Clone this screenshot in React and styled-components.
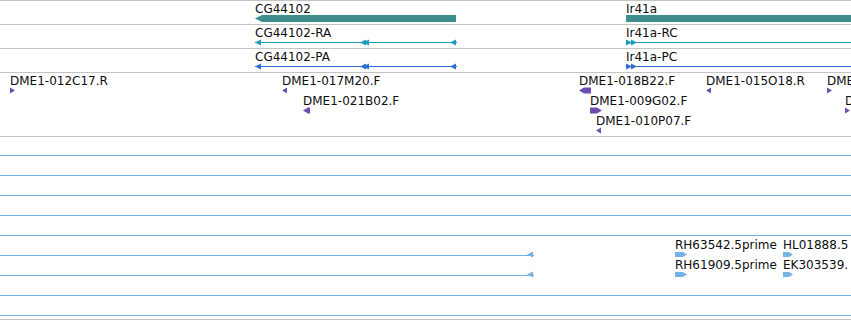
import styled, { createGlobalStyle } from "styled-components";

const GlobalStyle = createGlobalStyle`
  html, body {
    margin: 0;
    padding: 0;
    background: #fff;
  }
  body {
    font-family: "DejaVu Sans", "Liberation Sans", sans-serif;
  }
`;

const GENE = "#3f8e8e";
const RNA = "#1c9bbb";
const PROT = "#2f6ccf";
const CLONE = "#6c4eb0";
const EST = "#74b3e2";

const View = styled.div`
  width: 851px;
  height: 320px;
  overflow: hidden;
  border-top: 1px solid #c3c3c3;
  box-sizing: border-box;
`;

const Track = styled.div`
  position: relative;
  height: ${(p) => p.$h}px;
  border-bottom: 1px solid #c3c3c3;
  overflow: hidden;
`;

const Feature = styled.div`
  position: absolute;
  left: ${(p) => p.$x}px;
  top: ${(p) => p.$row * 20}px;
  display: flex;
  flex-direction: column;
  align-items: flex-start;
`;

const Label = styled.div`
  margin-top: 1px;
  height: 13px;
  line-height: 14px;
  font-size: 12px;
  color: #0d0d0d;
  white-space: nowrap;
`;

const Glyph = styled.svg`
  display: block;
  height: 7px;
  overflow: visible;
  shape-rendering: crispEdges;
`;

const head = (at, dir) =>
  dir === "l"
    ? `${at},3.5 ${at + 6},0.5 ${at + 6},6.5`
    : `${at + 6},3.5 ${at},0.5 ${at},6.5`;

const Bar = ({ w, color, taper }) => (
  <Glyph width={w} viewBox={`0 0 ${w} 7`}>
    <polygon
      fill={color}
      points={taper ? `0,3.5 7,0 ${w},0 ${w},7 7,7` : `0,0 ${w},0 ${w},7 0,7`}
      shapeRendering="auto"
    />
  </Glyph>
);

const Transcript = ({ w, color, heads, lineY = 3, lineTo }) => (
  <Glyph width={w} viewBox={`0 0 ${w} 7`}>
    <rect x="0" y={lineY} width={lineTo ?? w} height="1" fill={color} />
    {heads.map(([at, dir], i) => (
      <polygon key={i} points={head(at, dir)} fill={color} shapeRendering="auto" />
    ))}
  </Glyph>
);

const Tri = ({ w, color, dir }) => (
  <Glyph width={w} viewBox={`0 0 ${w} 7`}>
    <polygon
      fill={color}
      shapeRendering="auto"
      points={
        dir === "l"
          ? `0,3.5 ${Math.min(5, w)},0.5 ${w},0.5 ${w},6.5 ${Math.min(5, w)},6.5`
          : `${w},3.5 ${Math.max(w - 5, 0)},0.5 0,0.5 0,6.5 ${Math.max(w - 5, 0)},6.5`
      }
    />
  </Glyph>
);

const Read = ({ w, color }) => (
  <Glyph width={w} viewBox={`0 0 ${w} 7`}>
    <polygon
      fill={color}
      shapeRendering="auto"
      points={`0,1 ${w - 4},1 ${w},3.5 ${w - 4},6 0,6`}
    />
  </Glyph>
);

const clones = [
  { x: 10, row: 0, label: "DME1-012C17.R", w: 5, dir: "r" },
  { x: 282, row: 0, label: "DME1-017M20.F", w: 5, dir: "l" },
  { x: 303, row: 1, label: "DME1-021B02.F", w: 7, dir: "l" },
  { x: 579, row: 0, label: "DME1-018B22.F", w: 12, dir: "l" },
  { x: 590, row: 1, label: "DME1-009G02.F", w: 12, dir: "r" },
  { x: 596, row: 2, label: "DME1-010P07.F", w: 5, dir: "l" },
  { x: 706, row: 0, label: "DME1-015O18.R", w: 5, dir: "l" },
  { x: 827, row: 0, label: "DME", w: 5, dir: "r" },
  { x: 845, row: 1, label: "D", w: 5, dir: "r" },
];

const estRows = [0, 1, 2, 3, 4, 7, 8];

const reads = [
  { x: 675, row: 5, label: "RH63542.5prime", w: 12 },
  { x: 783, row: 5, label: "HL01888.5", w: 10 },
  { x: 675, row: 6, label: "RH61909.5prime", w: 12 },
  { x: 783, row: 6, label: "EK303539.", w: 10 },
];

export default function App() {
  return (
    <>
      <GlobalStyle />
      <View>
        <Track $h={23}>
          <Feature $x={255} $row={0}>
            <Label>CG44102</Label>
            <Bar w={201} color={GENE} taper />
          </Feature>
          <Feature $x={626} $row={0}>
            <Label>Ir41a</Label>
            <Bar w={240} color={GENE} />
          </Feature>
        </Track>

        <Track $h={23}>
          <Feature $x={255} $row={0}>
            <Label>CG44102-RA</Label>
            <Transcript
              w={202}
              color={RNA}
              heads={[[0, "l"], [105, "l"], [108, "l"], [195, "l"]]}
            />
          </Feature>
          <Feature $x={626} $row={0}>
            <Label>Ir41a-RC</Label>
            <Transcript w={240} color={RNA} heads={[[0, "r"], [5, "r"]]} />
          </Feature>
        </Track>

        <Track $h={23}>
          <Feature $x={255} $row={0}>
            <Label>CG44102-PA</Label>
            <Transcript
              w={202}
              color={PROT}
              heads={[[0, "l"], [105, "l"], [108, "l"], [195, "l"]]}
            />
          </Feature>
          <Feature $x={626} $row={0}>
            <Label>Ir41a-PC</Label>
            <Transcript w={240} color={PROT} heads={[[0, "r"], [5, "r"]]} />
          </Feature>
        </Track>

        <Track $h={63}>
          {clones.map((c) => (
            <Feature key={c.label} $x={c.x} $row={c.row}>
              <Label>{c.label}</Label>
              <Tri w={c.w} color={CLONE} dir={c.dir} />
            </Feature>
          ))}
        </Track>

        <Track $h={182}>
          {estRows.map((r) => (
            <Feature key={r} $x={0} $row={r}>
              <Label />
              <Transcript w={851} color={EST} heads={[]} lineY={4} />
            </Feature>
          ))}
          {[5, 6].map((r) => (
            <Feature key={`s${r}`} $x={0} $row={r}>
              <Label />
              <Transcript
                w={534}
                color={EST}
                lineY={4}
                heads={[[527, "l"]]}
              />
            </Feature>
          ))}
          {reads.map((e) => (
            <Feature key={e.label} $x={e.x} $row={e.row}>
              <Label>{e.label}</Label>
              <Read w={e.w} color={EST} />
            </Feature>
          ))}
        </Track>
      </View>
    </>
  );
}
